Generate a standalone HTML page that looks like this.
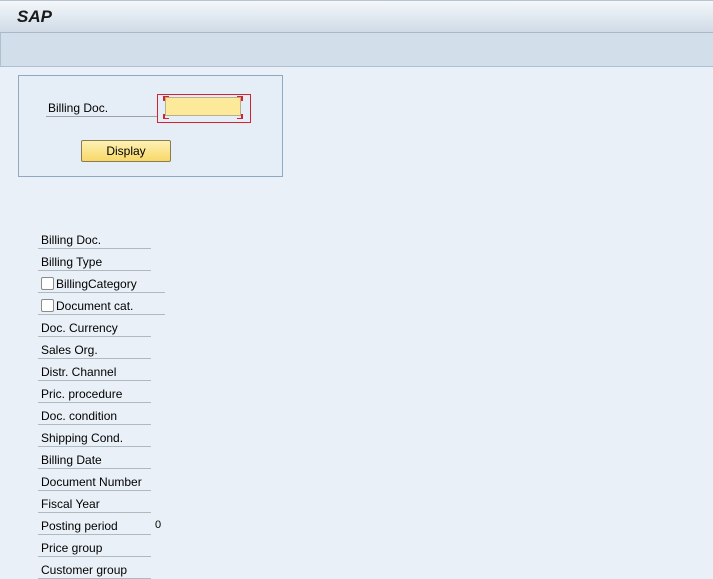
<!DOCTYPE html><html><head><style>
body{margin:0;width:713px;height:579px;background:#eaf0f7;font-family:"Liberation Sans",sans-serif;font-size:12px;color:#000;position:relative;overflow:hidden}
.top{position:absolute;left:0;top:0;width:713px;height:33px;background:linear-gradient(#f4f7fa,#cfdbe7);border-top:1px solid #b8c4d0;border-bottom:1px solid #a9b9c9;box-sizing:border-box}
.top b{position:absolute;left:17px;top:6px;font-size:17px;font-style:italic;color:#1a1a1a}
.tb{position:absolute;left:0;top:33px;width:713px;height:34px;background:#d2dfea;border-bottom:1px solid #aebfcf;border-left:1px solid #aebfcf;box-sizing:border-box}
.box{position:absolute;left:18px;top:75px;width:265px;height:102px;border:1px solid #8fa8c4;box-sizing:border-box;background:#e5edf6}
.l{position:absolute;white-space:nowrap}
.row{position:absolute;left:38px;height:21px;border-bottom:1px solid #b0b8c0;box-sizing:border-box;padding:5px 0 0 3px;white-space:nowrap}
.cb{display:inline-block;width:11px;height:11px;border:1px solid #8a8a8a;border-radius:2px;background:#fff;vertical-align:-2px;margin-right:2px}
.br{position:absolute;width:4px;height:4px;border-color:#d4232f;border-style:solid;border-width:0}
</style></head><body>
<div class="top"><b>SAP</b></div>
<div class="tb"></div>
<div class="box"></div>
<div class="l" style="left:48px;top:101px">Billing Doc.</div>
<div style="position:absolute;left:46px;top:116px;width:112px;height:1px;background:#a0a0a0"></div>
<div style="position:absolute;left:157px;top:94px;width:94px;height:29px;border:1px solid #d4232f;box-sizing:border-box"></div>
<div style="position:absolute;left:165px;top:97px;width:76px;height:19px;background:#fde99a;border:1px solid #b9b08a;box-sizing:border-box"></div>
<div class="br" style="left:163px;top:96px;border-left-width:2px;border-top-width:1px"></div>
<div class="br" style="left:237px;top:96px;border-right-width:2px;border-top-width:1px"></div>
<div class="br" style="left:163px;top:114px;border-left-width:2px;border-bottom-width:1px"></div>
<div class="br" style="left:237px;top:114px;border-right-width:2px;border-bottom-width:1px"></div>
<div style="position:absolute;left:81px;top:140px;width:90px;height:22px;background:linear-gradient(#fdf1b5,#f8d868);border:1px solid #8a7c50;border-radius:2px;box-sizing:border-box;text-align:center;line-height:21px">Display</div>
<div class="row" style="top:228px;width:113px">Billing Doc.</div>
<div class="row" style="top:250px;width:113px">Billing Type</div>
<div class="row" style="top:272px;width:127px"><span class="cb"></span>BillingCategory</div>
<div class="row" style="top:294px;width:127px"><span class="cb"></span>Document cat.</div>
<div class="row" style="top:316px;width:113px">Doc. Currency</div>
<div class="row" style="top:338px;width:113px">Sales Org.</div>
<div class="row" style="top:360px;width:113px">Distr. Channel</div>
<div class="row" style="top:382px;width:113px">Pric. procedure</div>
<div class="row" style="top:404px;width:113px">Doc. condition</div>
<div class="row" style="top:426px;width:113px">Shipping Cond.</div>
<div class="row" style="top:448px;width:113px">Billing Date</div>
<div class="row" style="top:470px;width:113px">Document Number</div>
<div class="row" style="top:492px;width:113px">Fiscal Year</div>
<div class="row" style="top:514px;width:113px">Posting period</div>
<div class="l" style="left:155px;top:519px;font-size:11px">0</div>
<div class="row" style="top:536px;width:113px">Price group</div>
<div class="row" style="top:558px;width:113px">Customer group</div>
</body></html>
